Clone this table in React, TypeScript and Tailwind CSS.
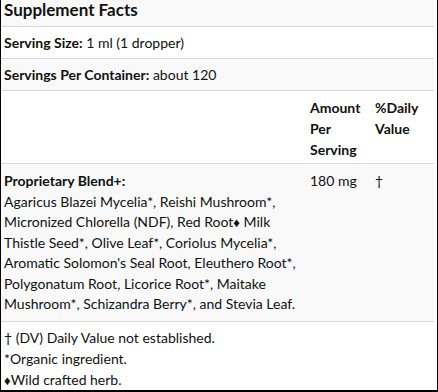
import React from "react";

const font = { fontFamily: "Lato, 'Noto Sans', sans-serif" };

// the diamond marks wild crafted herbs; kept to a tight line box so the
// fallback glyph does not stretch its line
function Diamond() {
  return <span className="text-[13px] leading-none">♦</span>;
}

export default function App() {
  return (
    <div className="w-[438px] bg-white text-[14px] leading-[21px] text-[#111]" style={font}>
      <div className="border-x border-b-2 border-black pr-[3px]">
        <div className="w-[433px]">
          {/* title */}
          <div className="h-[27px] border-b border-[#d9d9d9] bg-[#f9f9f9] pl-[3px] pt-[1px]">
            <h2 className="text-[17px] font-bold leading-[18px]">Supplement Facts</h2>
          </div>
          {/* serving size */}
          <div className="h-[32px] border-b border-[#d9d9d9] px-[3px] py-[5px]">
            <span className="font-bold">Serving Size:</span> 1 ml (1 dropper)
          </div>
          {/* servings per container */}
          <div className="h-[32px] border-b border-[#d9d9d9] bg-[#f9f9f9] px-[3px] py-[5px]">
            <span className="font-bold">Servings Per Container:</span> about 120
          </div>
          {/* column headings */}
          <div className="grid h-[73px] grid-cols-[305px_65px_1fr] border-b border-[#d9d9d9] pt-[6px] pb-[3px] font-bold">
            <div />
            <div className="pl-[4px]">
              Amount
              <br />
              Per
              <br />
              Serving
            </div>
            <div className="pl-[4px]">
              %Daily
              <br />
              Value
            </div>
          </div>
          {/* blend */}
          <div className="grid h-[158px] grid-cols-[305px_65px_1fr] border-b border-[#d9d9d9] bg-[#f9f9f9] pt-[7px] leading-[20.5px]">
            <div className="pl-[3px] pr-[6px]">
              <div className="font-bold">Proprietary Blend+:</div>
              <div>
                Agaricus Blazei Mycelia*, Reishi Mushroom*, Micronized Chlorella (NDF), Red Root
                <Diamond /> Milk Thistle Seed*, Olive Leaf*, Coriolus Mycelia*, Aromatic Solomon's Seal
                Root, Eleuthero Root*, Polygonatum Root, Licorice Root*, Maitake Mushroom*, Schizandra
                Berry*, and Stevia Leaf.
              </div>
            </div>
            <div className="pl-[4px]">180 mg</div>
            <div className="pl-[4px]">†</div>
          </div>
          {/* footnotes */}
          <div className="h-[68px] px-[3px] pt-[5px]">
            <div>† (DV) Daily Value not established.</div>
            <div>*Organic ingredient.</div>
            <div>
              <Diamond />
              Wild crafted herb.
            </div>
          </div>
        </div>
      </div>
    </div>
  );
}
